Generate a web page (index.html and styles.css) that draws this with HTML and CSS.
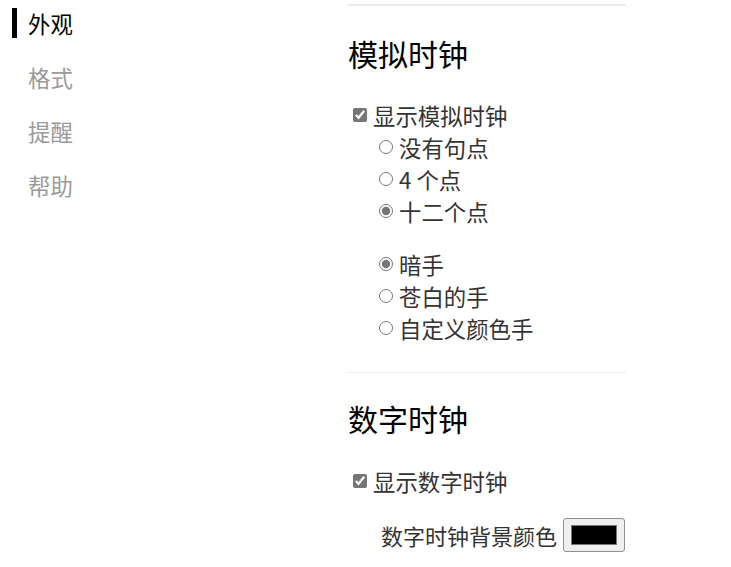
FILE: index.html
```html
<!DOCTYPE html>
<html lang="zh-CN">
<head>
    <meta charset="UTF-8">
    <title>选项</title>
    <link rel="stylesheet" href="styles.css">
</head>
<body>

<div class="page">
    <nav class="side-nav">
        <a class="nav-item active" href="#appearance">外观</a>
        <a class="nav-item" href="#format">格式</a>
        <a class="nav-item" href="#alarm">提醒</a>
        <a class="nav-item" href="#help">帮助</a>
    </nav>

    <main class="options">
        <section class="option-section analog">
            <h2>模拟时钟</h2>
            <label class="check-row"><input type="checkbox" checked> 显示模拟时钟</label>
            <div class="radio-group">
                <label class="radio-row"><input type="radio" name="dots"> 没有句点</label>
                <label class="radio-row"><input type="radio" name="dots"> 4 个点</label>
                <label class="radio-row"><input type="radio" name="dots" checked> 十二个点</label>
            </div>
            <div class="radio-group spaced">
                <label class="radio-row"><input type="radio" name="hands" checked> 暗手</label>
                <label class="radio-row"><input type="radio" name="hands"> 苍白的手</label>
                <label class="radio-row"><input type="radio" name="hands"> 自定义颜色手</label>
            </div>
        </section>

        <section class="option-section digital">
            <h2>数字时钟</h2>
            <label class="check-row"><input type="checkbox" checked> 显示数字时钟</label>
            <div class="color-row">
                <span class="color-label">数字时钟背景颜色</span>
                <span class="color-swatch"><span class="swatch-fill"></span></span>
            </div>
        </section>
    </main>
</div>

</body>
</html>
```

FILE: styles.css
```css
body {
    margin: 0;
    font-family: "Noto Sans CJK SC", "Noto Sans", sans-serif;
    font-size: 22.4px;
    color: #333;
    background-color: #fff;
}
.page {
    display: grid;
    grid-template-columns: 348px 278px;
}

/* left navigation */
.side-nav {
    display: flex;
    flex-direction: column;
    gap: 24px;
    padding: 8px 0 0 12px;
}
.nav-item {
    display: block;
    height: 30px;
    line-height: 30px;
    padding-left: 11px;
    border-left: 5px solid transparent;
    color: #9a9a9a;
    text-decoration: none;
}
.nav-item.active {
    color: #000;
    border-left-color: #000;
}

/* right column */
.options {
    padding-top: 4px;
}
.option-section {
    border-top: 1px solid #ededed;
}
.option-section.analog {
    border-top: 2px solid #ebebeb;
    padding-bottom: 28px;
}
h2 {
    margin: 29px 0 28px;
    font-size: 30px;
    font-weight: normal;
    line-height: 36px;
    color: #000;
}
.digital h2 {
    margin: 27px 0 29px;
}
.check-row, .radio-row {
    display: flex;
    align-items: center;
    height: 32px;
    white-space: nowrap;
}
.check-row {
    padding-left: 4px;
}
.radio-group {
    padding-left: 30px;
}
.radio-group.spaced {
    margin-top: 21px;
}
input[type="checkbox"], input[type="radio"] {
    accent-color: #767676;
    width: 14px;
    height: 14px;
    margin: 0 6px 0 1px;
}
.color-row {
    display: flex;
    align-items: center;
    gap: 6px;
    margin-top: 21px;
    padding-left: 33px;
    white-space: nowrap;
}
.color-label {
    font-size: 22px;
}
.color-swatch {
    flex-shrink: 0;
    box-sizing: border-box;
    width: 62px;
    height: 34px;
    padding: 6px 7px;
    border: 1px solid #8f8f8f;
    border-radius: 3px;
    background-color: #efefef;
}
.swatch-fill {
    display: block;
    height: 100%;
    box-sizing: border-box;
    background-color: #000;
    border: 1px solid #777;
}
```
